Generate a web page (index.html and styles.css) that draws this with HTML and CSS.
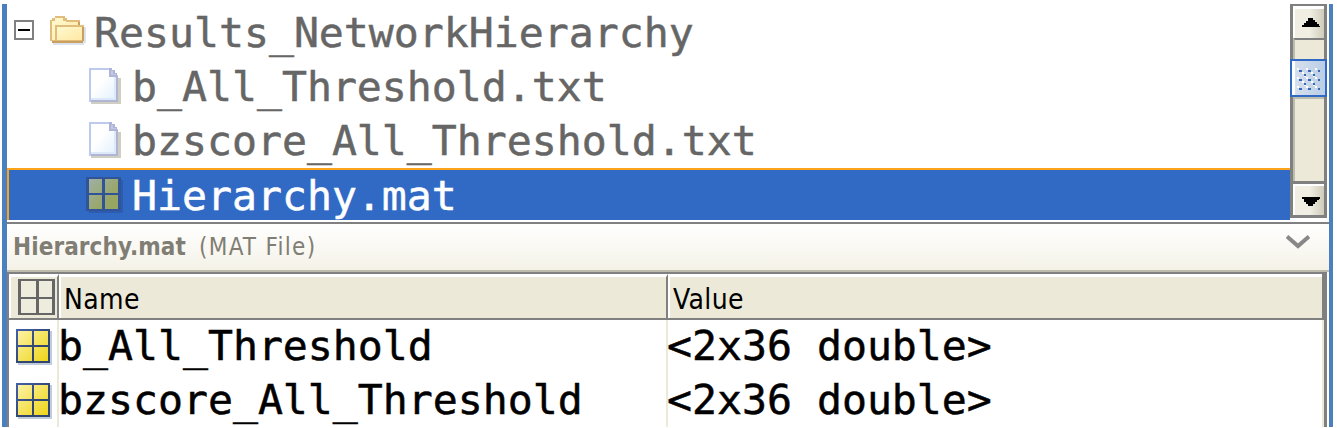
FILE: index.html
```
<!DOCTYPE html>
<html lang="en">
<head>
<meta charset="utf-8">
<title>Results_NetworkHierarchy</title>
<link rel="stylesheet" href="styles.css">
</head>
<body>
<svg width="0" height="0" class="defs">
  <defs>
    <linearGradient id="yellow" x2="1" y2="1"><stop stop-color="#fcf2a5"/><stop offset="1" stop-color="#eed518"/></linearGradient>
    <linearGradient id="navy" x2="1" y2="1"><stop stop-color="#4560ad"/><stop offset=".6" stop-color="#30456f"/></linearGradient>
    <linearGradient id="fold" x2="1" y2="1"><stop stop-color="#fff9d0"/><stop offset="1" stop-color="#ffe8a3"/></linearGradient>
    <linearGradient id="sheet" x2="1" y2="1"><stop offset=".4" stop-color="#fff"/><stop offset="1" stop-color="#e2f0fc"/></linearGradient>
    <linearGradient id="olive" x2="1" y2="1"><stop stop-color="#9eb0a5"/><stop offset=".7" stop-color="#98a664"/></linearGradient>
    <symbol id="page" viewBox="0 0 32 36">
      <path d="M2 10h30v26H2z" fill="#cecec2"/>
      <path d="M0 0h22v2h3v3h2v2h2v27H0z" fill="#bccbed"/>
      <path d="M20 0h3v2h3v3h2v3h1v26H2v-2h25V9h-7z" fill="#b1b4d3"/>
      <path d="M2 2h18v7h7v23H2z" fill="url(#sheet)"/>
      <path d="M2 30h25v2H2zM25 9h2v23h-2z" fill="#dce9fa"/>
      <path d="M22 3h2v3h3v1h-5z" fill="#bccbed"/>
    </symbol>
    <symbol id="grid" viewBox="0 0 36 36">
      <path d="M2 2h34v34H2z" fill="#c0ccda"/>
      <path d="M0 0h34v34H0z" fill="url(#navy)"/>
      <path d="M2 2h14v14H2zM18 2h14v14H18zM2 18h14v14H2zM18 18h14v14H18z" fill="url(#yellow)"/>
    </symbol>
  </defs>
</svg>
<main class="window">
  <section class="browser">
    <div class="tree">
      <div class="row root">
        <svg class="toggle" viewBox="0 0 20 20"><path d="M1 1h18v18H1z" fill="#fff" stroke="#808080" stroke-width="2"/><path d="M4 9h12v2H4z"/></svg>
        <svg class="folder" viewBox="0 0 36 29" shape-rendering="crispEdges">
          <path d="M3 27V29H34V27H36V11H33V27z" fill="#dce3ec"/>
          <path d="M0 4h2V2h3V0h10v2h2v2h13v5h4v13h-1v5H2v-2H0z" fill="#e0bd7b"/>
          <path d="M2 5h3V2h8v3h3v1h12v3H5v15H2z" fill="url(#fold)"/>
          <path d="M7 11h25v13H7z" fill="url(#fold)"/>
          <path d="M2 25h31v2H2zM32 11h2v14h-2z" fill="#c99f61"/>
          <path d="M28 6h2v3h-2z" fill="#c99f61"/>
        </svg>
        <span>Results_NetworkHierarchy</span>
      </div>
      <div class="row"><svg class="page"><use href="#page"/></svg><span>b_All_Threshold.txt</span></div>
      <div class="row"><svg class="page"><use href="#page"/></svg><span>bzscore_All_Threshold.txt</span></div>
      <div class="row selected">
        <svg class="mat" viewBox="0 0 37 36"><path d="M3 3h34v33H3z" fill="#2c5bb1"/><path d="M0 0h35v34H0z" fill="#315397"/><path d="M3 2h13v14H3zM19 2h13v14H19zM3 18h13v14H3zM19 18h13v14H19z" fill="url(#olive)"/></svg>
        <span>Hierarchy.mat</span>
      </div>
    </div>
    <div class="scrollbar">
      <div class="arrow"><svg viewBox="0 0 18 9" shape-rendering="crispEdges"><path d="M0 9V7h2V5h2V3h2V0h5v2h2v2h2v2h2v2h1v1z"/></svg></div>
      <div class="track short"></div>
      <div class="thumb">
        <svg viewBox="0 0 23 22" shape-rendering="crispEdges">
          <path d="M0 0h2v2H0zM9 0h2v2H9zM18 0h2v2h-2zM5 4h2v2H5zM14 4h2v2h-2zM0 9h2v2H0zM9 9h2v2H9zM18 9h2v2h-2zM5 13h2v2H5zM14 13h2v2h-2zM0 18h2v2H0zM9 18h2v2H9zM18 18h2v2h-2zM7 7h2v2H7zM16 7h2v2h-2zM7 16h2v2H7zM16 16h2v2h-2z" fill="#fff"/>
          <path d="M2 2h3v2H2zM11 2h3v2h-3zM21 2h2v2h-2zM7 6h2v2H7zM16 6h2v2h-2zM2 11h3v2H2zM11 11h3v2h-3zM21 11h2v2h-2zM7 15h2v2H7zM16 15h2v2h-2zM2 20h3v2H2zM11 20h3v2h-3zM21 20h2v2h-2z" fill="#3868ba"/>
        </svg>
      </div>
      <div class="track"></div>
      <div class="arrow down"><svg viewBox="0 0 18 9" shape-rendering="crispEdges"><path d="M0 0h18v2h-1v1h-2v2h-2v2h-2v2H6V7H4V5H2V2H0z"/></svg></div>
    </div>
  </section>
  <section class="details">
    <b>Hierarchy.mat</b><span>(MAT File)</span>
    <svg class="chevron" viewBox="0 0 24 14"><path d="M1 1.5l11 9.5L23 1.5" fill="none" stroke="#888" stroke-width="4"/></svg>
  </section>
  <section class="table">
    <div class="line head">
      <div class="cell icon"><svg viewBox="0 0 37 36"><path d="M0 0h37v36H0z" fill="#666"/><path d="M3 2h15v16H3zM21 2h13v16H21zM3 20h15v14H3zM21 20h13v14H21z" fill="#eeecdd"/></svg></div>
      <div class="cell name">Name</div>
      <div class="cell">Value</div>
    </div>
    <div class="line">
      <div class="cell icon"><svg class="var"><use href="#grid"/></svg></div>
      <div class="cell name">b_All_Threshold</div>
      <div class="cell">&lt;2x36 double&gt;</div>
    </div>
    <div class="line">
      <div class="cell icon"><svg class="var"><use href="#grid"/></svg></div>
      <div class="cell name">bzscore_All_Threshold</div>
      <div class="cell">&lt;2x36 double&gt;</div>
    </div>
  </section>
</main>
</body>
</html>
```
FILE: styles.css
```
* { box-sizing: border-box; }
body { margin: 0; background: #fff; overflow: hidden; }
svg { display: block; flex: none; }
.defs { position: absolute; }
.window {
  width: 1331px; height: 423px; margin: 4px 0 0 2px;
  border-left: 5px solid #4a80c0; border-right: 4px solid #4a80c0;
  overflow: hidden;
}
.browser { display: flex; height: 220px; border-bottom: 2px solid #808080; }
.tree { width: 1283px; height: 216px; padding-top: 1px; font: 41.5px/56px "DejaVu Sans Mono", monospace; color: #666; -webkit-text-stroke: .5px; }
.row { display: flex; height: 54px; padding-left: 82px; white-space: pre; }
.row span { margin-left: 11px; }
.root { padding-left: 7px; }
.root span { margin-left: 8px; }
.toggle { width: 20px; height: 20px; margin-top: 15px; }
.folder { width: 36px; height: 29px; margin: 11px 0 0 16px; }
.page { width: 32px; height: 36px; margin-top: 9px; }
.selected { height: 52px; margin-top: 1px; padding-left: 77px; background: #316ac5; color: #fff; border: solid #fba31a; border-width: 2px 0 0 2px; line-height: 52px; }
.selected span { margin-left: 9px; }
.mat { width: 37px; height: 36px; margin-top: 7px; }
.scrollbar { width: 37px; height: 214px; border: 3px solid #808080; border-top-width: 2px; display: flex; flex-direction: column; background: #ece9d8; }
.arrow { height: 32px; flex: none; border: solid #fff; border-width: 3px 0 0 2px; background: linear-gradient(90deg, #f1efe3 50%, #cfccbb); }
.arrow svg { width: 18px; height: 9px; margin: 9px 0 0 7px; }
.track { flex: 1; border: solid #bdbdad; border-width: 2px 0 0 2px; }
.track.short { flex: none; height: 21px; border-top: 2px solid #808080; }
.thumb { height: 38px; flex: none; margin: 0 -3px; padding: 4px 0 0 5px; border: 2px solid #316ac5; background: linear-gradient(90deg, #fff 3px, #d6e0ee 3px, #b9cee6); }
.thumb svg { width: 23px; height: 22px; margin-top: 3px; }
.arrow.down { height: 31px; border-top: 2px solid #fff; box-shadow: 0 -3px #808080; }
.arrow.down svg { margin-top: 11px; }
.details { display: flex; height: 48px; padding-left: 6px; font: 24px/46px "DejaVu Sans Condensed", "DejaVu Sans", sans-serif; color: #807e74; background: linear-gradient(#fff, #f4f2e7); border-bottom: 2px solid #bebcac; letter-spacing: 1.3px; }
.details b { width: 186px; letter-spacing: 0.1px; }
.chevron { width: 24px; height: 14px; margin: 11px 19px 0 auto; }
.table { width: 1320px; height: 156px; border: solid #808080; border-width: 2px 3px 0 2px; }
.line { display: flex; height: 54px; font: 41.5px/52px "DejaVu Sans Mono", monospace; color: #000; white-space: pre; -webkit-text-stroke: .5px; }
.cell { flex: 1; padding-left: 0; border-right: 2px solid #ece9d8; text-indent: -1px; }
.cell.icon { flex: none; width: 50px; padding: 9px 0 0 7px; }
.cell.name { flex: none; width: 609px; }
.var { width: 36px; height: 36px; }
.head { height: 46px; font: 28px/45px "DejaVu Sans Condensed", "DejaVu Sans", sans-serif; border: solid #808080; border-width: 0 2px 2px 0; -webkit-text-stroke: 0; }
.head .cell { padding-left: 4px; border-right-color: #808080; background: #ece9d8; border-top: 3px solid #fff; border-left: 2px solid #fff; letter-spacing: .4px; }
.head .cell:last-child { border-right: 0; }
.head .icon { padding: 2px 0 0 7px; }
.head svg { width: 37px; height: 36px; }
```
